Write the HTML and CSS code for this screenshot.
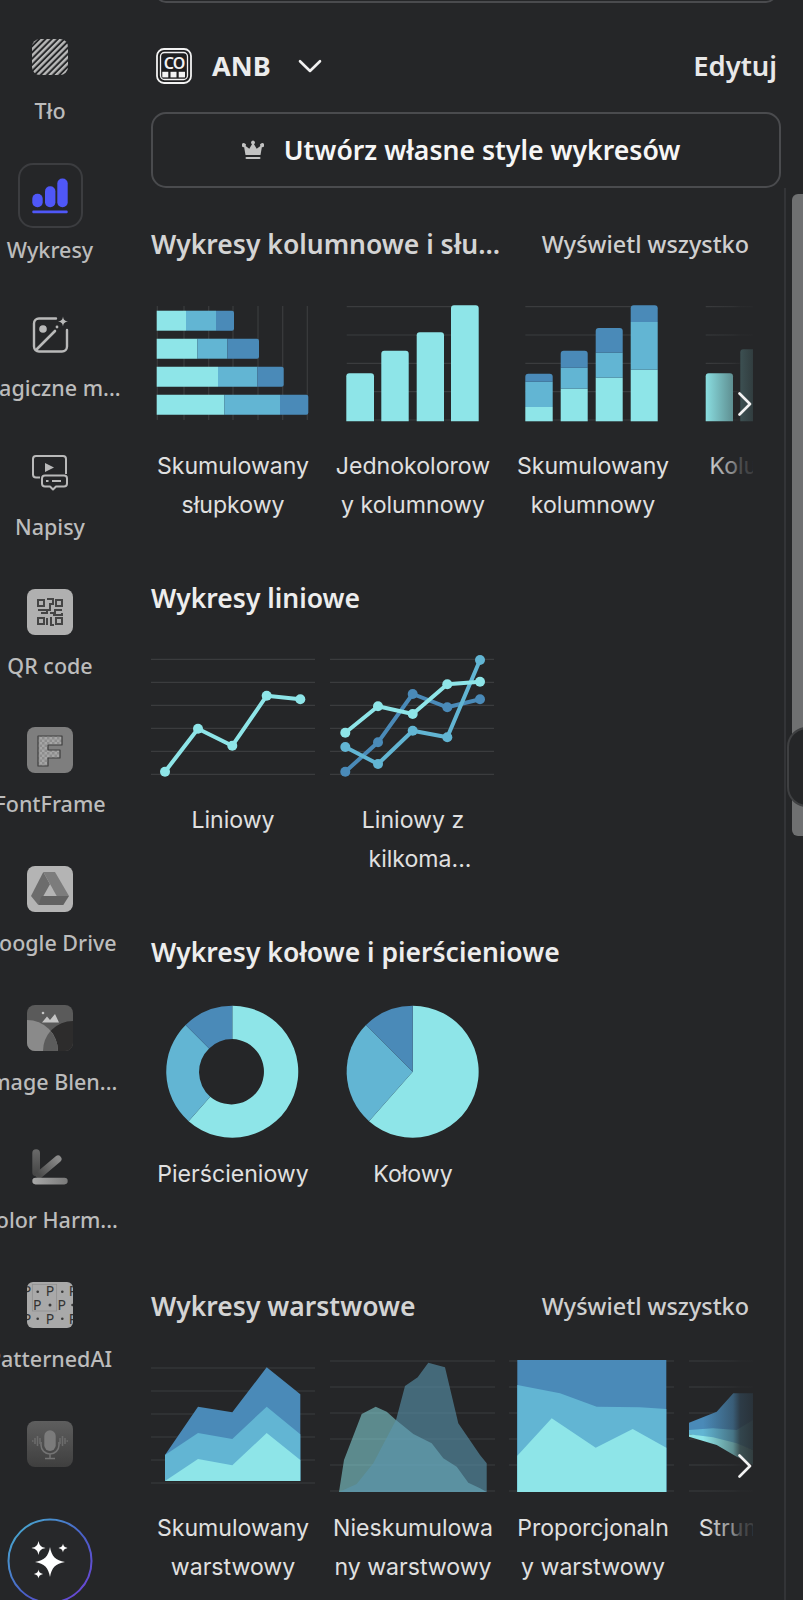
FILE: index.html
```html
<!DOCTYPE html>
<html lang="pl">
<head>
<meta charset="utf-8">
<title>Wykresy</title>
<link rel="stylesheet" href="styles.css">
</head>
<body>
<div class="app">
  <nav class="rail">
    <div class="rail-item">
      <div class="rail-icon">
        <svg width="46" height="46" viewBox="0 0 46 46">
          <defs>
            <pattern id="stripes" width="4.4" height="4.4" patternUnits="userSpaceOnUse" patternTransform="rotate(-45)"><rect width="4.4" height="2.4" fill="#b9b9b9"/></pattern>
          </defs>
          <rect x="5" y="5" width="36" height="36" rx="8" fill="url(#stripes)"/>
        </svg>
      </div>
      <span class="rail-label">Tło</span>
    </div>
    <div class="rail-item">
      <div class="rail-icon">
        <div class="active-box">
          <svg width="36" height="36" viewBox="0 0 36 36">
            <rect x="0.300" y="15.800" width="10.400" height="13.400" rx="5" fill="#4f57f8"/>
            <rect x="13" y="8.200" width="10.400" height="21" rx="5" fill="#4f57f8"/>
            <rect x="25.300" y="0.500" width="10.400" height="28.700" rx="5" fill="#4f57f8"/>
            <rect x="0.300" y="32.500" width="35.400" height="2.700" rx="1" fill="#4f57f8"/>
          </svg>
        </div>
      </div>
      <span class="rail-label">Wykresy</span>
    </div>
    <div class="rail-item">
      <div class="rail-icon">
        <svg width="46" height="46" viewBox="0 0 46 46" fill="none" stroke="#b9b9b9" stroke-width="2.4" stroke-linecap="round">
          <path d="M29 7.500H12a5 5 0 0 0-5 5v23a5 5 0 0 0 5 5h23a5 5 0 0 0 5-5V19"/>
          <circle cx="16" cy="18" r="3.800" fill="#b9b9b9" stroke="none"/>
          <path d="M10 38 28 20" stroke-width="2.600"/>
          <path d="M36 5.500c.6 3.400 1.600 4.400 5 5-3.400.6-4.400 1.600-5 5-.6-3.400-1.600-4.400-5-5 3.400-.6 4.400-1.600 5-5z" fill="#b9b9b9" stroke="none"/>
          <circle cx="30" cy="16" r="1.400" fill="#b9b9b9" stroke="none"/>
        </svg>
      </div>
      <span class="rail-label">Magiczne m...</span>
    </div>
    <div class="rail-item">
      <div class="rail-icon">
        <svg width="46" height="46" viewBox="0 0 46 46" fill="none" stroke="#b9b9b9" stroke-width="2" stroke-linejoin="round">
          <path d="M13 27.500H9a3 3 0 0 1-3-3V9a3 3 0 0 1 3-3h27a3 3 0 0 1 3 3v15"/>
          <path d="M18 13v9l9-4.500z" fill="#b9b9b9" stroke="none"/>
          <path d="M18 25.500h19a3 3 0 0 1 3 3v5a3 3 0 0 1-3 3h-8l-3 3-3-3h-5a3 3 0 0 1-3-3v-5a3 3 0 0 1 3-3z"/>
          <path d="M19 31h2.500M25 31h9" stroke-width="1.800"/>
        </svg>
      </div>
      <span class="rail-label">Napisy</span>
    </div>
    <div class="rail-item">
      <div class="rail-icon">
        <svg width="46" height="46" viewBox="0 0 46 46">
          <rect width="46" height="46" rx="8" fill="#b0b0b0"/>
          <g fill="none" stroke="#454545" stroke-width="2">
            <rect x="11" y="11" width="6" height="6"/><rect x="29" y="11" width="6" height="6"/><rect x="11" y="29" width="6" height="6"/><rect x="29" y="29" width="6" height="6"/>
            <path d="M20 10h6v5h-3v6h-12M14 24h6v-3M23 24h5v-3h7M35 24v2h-8v-3M20 29v7M24 28v8h3"/>
          </g>
        </svg>
      </div>
      <span class="rail-label">QR code</span>
    </div>
    <div class="rail-item">
      <div class="rail-icon">
        <svg width="46" height="46" viewBox="0 0 46 46">
          <defs>
            <pattern id="check" width="5" height="5" patternUnits="userSpaceOnUse"><rect width="5" height="5" fill="#a5a5a5"/><rect width="2.500" height="2.500" fill="#8d8d8d"/><rect x="2.500" y="2.500" width="2.500" height="2.500" fill="#8d8d8d"/></pattern>
          </defs>
          <rect width="46" height="46" rx="8" fill="#7e7e7e"/>
          <path d="M11 9h24v9H21v5h12v8H21v8H11z" fill="url(#check)" stroke="#3f3f3f" stroke-width="1.200" stroke-linejoin="round"/>
        </svg>
      </div>
      <span class="rail-label">FontFrame</span>
    </div>
    <div class="rail-item">
      <div class="rail-icon">
        <svg width="46" height="46" viewBox="0 0 46 46">
          <rect width="46" height="46" rx="8" fill="#b4b4b4"/>
          <polygon points="16.300,6 23,18.300 11.300,39 4,30" fill="#6c6c6c"/>
          <polygon points="16.300,6 28,6 42,30 29.700,30" fill="#7c7c7c"/>
          <polygon points="14.700,30 42,30 36.300,39 11.300,39" fill="#626262"/>
        </svg>
      </div>
      <span class="rail-label">Google Drive</span>
    </div>
    <div class="rail-item">
      <div class="rail-icon">
        <svg width="46" height="46" viewBox="0 0 46 46">
          <defs><clipPath id="blend"><rect width="46" height="46" rx="8"/></clipPath></defs>
          <g clip-path="url(#blend)">
            <rect width="46" height="46" fill="#5a5a5a"/>
            <circle cx="46" cy="46" r="30" fill="#2d2c2c"/>
            <circle cx="0" cy="46" r="31" fill="#8a8a8a"/>
            <path d="M16 46a30 30 0 0 1 7.500-20 31 31 0 0 1 7.500 20z" fill="#5c5c5c"/>
            <path d="M15 17.500l5-6 3 3.500 5-6 4 8.500z" fill="#c4c4c4"/>
            <circle cx="16" cy="8" r="1.300" fill="#c4c4c4"/>
          </g>
        </svg>
      </div>
      <span class="rail-label">Image Blen...</span>
    </div>
    <div class="rail-item">
      <div class="rail-icon">
        <svg width="46" height="46" viewBox="0 0 46 46">
          <defs>
            <linearGradient id="harmH"><stop offset="0" stop-color="#a8a8a8"/><stop offset="1" stop-color="#7a7a7a"/></linearGradient>
            <linearGradient id="harmV" x1="0" y1="0" x2="0" y2="1"><stop offset="0" stop-color="#6a6a6a"/><stop offset="1" stop-color="#444"/></linearGradient>
            <linearGradient id="harmD" gradientUnits="userSpaceOnUse" x1="12" y1="32" x2="31" y2="16"><stop offset="0" stop-color="#4a4a4a"/><stop offset="1" stop-color="#8a8a8a"/></linearGradient>
          </defs>
          <rect x="5.300" y="6.300" width="7.700" height="27" rx="3.800" fill="url(#harmV)"/>
          <path d="M12 32 31 16" stroke="url(#harmD)" stroke-width="7" stroke-linecap="round" fill="none"/>
          <rect x="5.300" y="34.700" width="35.400" height="6.700" rx="3.300" fill="url(#harmH)"/>
        </svg>
      </div>
      <span class="rail-label">Color Harm...</span>
    </div>
    <div class="rail-item">
      <div class="rail-icon">
        <svg width="46" height="46" viewBox="0 0 46 46">
          <defs><clipPath id="patclip"><rect width="46" height="46" rx="6"/></clipPath></defs>
          <g clip-path="url(#patclip)">
            <rect width="46" height="46" fill="#a9a9a9"/>
            <rect x="5.300" y="2.300" width="24.400" height="26.700" fill="none" stroke="#8c8c8c" stroke-width="0.700"/>
            <g class="pat-letters">
              <text x="23" y="14">P</text><text x="10.300" y="28">P</text><text x="34.700" y="28">P</text><text x="23" y="42">P</text>
              <text x="0" y="14">P</text><text x="46" y="14">P</text><text x="0" y="42">P</text><text x="46" y="42">P</text>
            </g>
            <g fill="#3a3a3a"><circle cx="10.700" cy="9.700" r="1.300"/><circle cx="35.300" cy="9.700" r="1.300"/><circle cx="23" cy="23" r="1.500"/><circle cx="10.700" cy="36.700" r="1.300"/><circle cx="35.300" cy="36.700" r="1.300"/><circle cx="45.500" cy="23" r="1.300"/></g>
          </g>
        </svg>
      </div>
      <span class="rail-label">PatternedAI</span>
    </div>
    <div class="rail-item">
      <div class="rail-icon">
        <svg width="46" height="46" viewBox="0 0 46 46">
          <defs><linearGradient id="voice" x1="0" y1="0" x2="0" y2="1"><stop offset="0" stop-color="#5e5e5e"/><stop offset="1" stop-color="#3f3f3f"/></linearGradient></defs>
          <rect width="46" height="46" rx="8" fill="url(#voice)"/>
          <rect x="17.300" y="9.300" width="11.400" height="20.700" rx="5.700" fill="#7b7b7b"/>
          <path d="M14 21v3a9 9 0 0 0 18 0v-3M23 33v4M18 37.500h10" fill="none" stroke="#747474" stroke-width="1.500"/>
          <path d="M5 20h1.500M8 17v6M10.500 15v10M13 17v6M33 17v6M35.500 15v10M38 17v6M39.500 20H41" fill="none" stroke="#6c6c6c" stroke-width="1.500"/>
        </svg>
      </div>
    </div>
    <div class="magic">
      <svg width="86" height="86" viewBox="0 0 86 86">
        <defs><linearGradient id="ring" x1="0" y1="0" x2="1" y2="1"><stop offset="0.1" stop-color="#48a6cf"/><stop offset="0.55" stop-color="#4a5fc8"/><stop offset="1" stop-color="#7240d8"/></linearGradient></defs>
        <circle cx="43" cy="43" r="41.500" fill="#27282a" stroke="url(#ring)" stroke-width="2"/>
        <path d="M43 29c1.600 9.400 5.600 13.400 15 15-9.400 1.600-13.400 5.600-15 15-1.600-9.400-5.600-13.400-15-15 9.400-1.600 13.400-5.600 15-15z" fill="#fff"/>
        <path d="M31.500 23c1 4.600 2.400 6 7 7-4.600 1-6 2.400-7 7-1-4.600-2.400-6-7-7 4.600-1 6-2.400 7-7z" fill="#fff"/>
        <path d="M56 25.500c.6 2.800 1.200 3.400 4.500 4.500-3.300 1.100-3.900 1.700-4.500 4.500-.6-2.800-1.200-3.400-4.500-4.500 3.300-1.100 3.900-1.700 4.500-4.500z" fill="#fff"/>
        <path d="M31.500 51.500c.6 2.800 1.200 3.400 4.500 4.500-3.300 1.100-3.900 1.700-4.500 4.500-.6-2.800-1.200-3.400-4.500-4.500 3.300-1.100 3.900-1.700 4.500-4.500z" fill="#fff"/>
      </svg>
    </div>
  </nav>

  <main class="panel">
    <div class="top-box"></div>

    <div class="brand-row">
      <div class="brand">
        <svg class="brand-logo" width="36" height="36" viewBox="0 0 36 36">
          <rect x="1" y="1" width="34" height="34" rx="7" fill="#1f1f20" stroke="#f2f2f2" stroke-width="1.800"/>
          <rect x="4.500" y="4.500" width="27" height="27" rx="4" fill="none" stroke="#f2f2f2" stroke-width="1.300"/>
          <text class="brand-co" x="18" y="20.800">CO</text>
          <rect x="6.300" y="23.800" width="6" height="5.600" fill="#f2f2f2"/>
          <rect x="14.500" y="23.800" width="6" height="5.600" fill="#f2f2f2"/>
          <rect x="22.700" y="23.800" width="6.300" height="5.600" fill="#f2f2f2"/>
        </svg>
        <span class="brand-name">ANB</span>
        <svg width="24" height="14" viewBox="0 0 24 14"><path d="M2 2.200 12 12 22 2.200" fill="none" stroke="#f0f0f0" stroke-width="2.600" stroke-linecap="round" stroke-linejoin="round"/></svg>
      </div>
      <span class="edit">Edytuj</span>
    </div>

    <button class="create-btn" type="button">
      <svg width="22" height="20" viewBox="0 0 22 20"><path d="M11 0.500a2 2 0 0 1 1 3.700l2.700 4.500 3.700-2.600a2 2 0 1 1 1.500 1L18.500 15h-15L2.100 7.100a2 2 0 1 1 1.500-1l3.700 2.600L10 4.200a2 2 0 0 1 1-3.700z" fill="#c2c2c2"/><rect x="3.500" y="17" width="15" height="2" rx="1" fill="#c2c2c2"/></svg>
      <span>Utwórz własne style wykresów</span>
    </button>

    <section class="section">
      <div class="section-head dim">
        <h2>Wykresy kolumnowe i słu...</h2>
        <a class="see-all">Wyświetl wszystko</a>
      </div>
      <div class="carousel">
        <figure class="tile">
          <svg class="chart" viewBox="151 300 164 135">
            <g class="grid"><path d="M157.300 306v114M184 306v114M208.700 306v114M233 306v114M258 306v114M282.700 306v114M307.300 306v114"/></g>
            <path d="M156.700 310.700H186v20h-29.300z" class="c1"/><path d="M186 310.700h30v20h-30z" class="c2"/><path d="M216 310.700h16a2 2 0 0 1 2 2v16a2 2 0 0 1-2 2h-16z" class="c3"/>
            <path d="M156.700 338.700h40.600v20h-40.600z" class="c1"/><path d="M197.300 338.700h30v20h-30z" class="c2"/><path d="M227.300 338.700h29.700a2 2 0 0 1 2 2v16a2 2 0 0 1-2 2h-29.700z" class="c3"/>
            <path d="M156.700 366.700H218v20h-61.300z" class="c1"/><path d="M218 366.700h39.300v20H218z" class="c2"/><path d="M257.300 366.700h24.400a2 2 0 0 1 2 2v16a2 2 0 0 1-2 2h-24.400z" class="c3"/>
            <path d="M156.700 394.700h67.600v20h-67.600z" class="c1"/><path d="M224.300 394.700H280v20h-55.700z" class="c2"/><path d="M280 394.700h26.300a2 2 0 0 1 2 2v16a2 2 0 0 1-2 2H280z" class="c3"/>
          </svg>
          <figcaption>Skumulowany słupkowy</figcaption>
        </figure>
        <figure class="tile">
          <svg class="chart" viewBox="331 300 164 135">
            <g class="grid"><path d="M346.700 306.700H478M346.700 335H478M346.700 363.300H478M346.700 391.700H478M346.700 420H478"/></g>
            <path class="c1" d="M346.300 421.300v-45a3 3 0 0 1 3-3H371a3 3 0 0 1 3 3v45z"/>
            <path class="c1" d="M381.300 421.300v-67.600a3 3 0 0 1 3-3h21.400a3 3 0 0 1 3 3v67.600z"/>
            <path class="c1" d="M416.700 421.300v-86a3 3 0 0 1 3-3H441a3 3 0 0 1 3 3v86z"/>
            <path class="c1" d="M451 421.300v-113a3 3 0 0 1 3-3h21.700a3 3 0 0 1 3 3v113z"/>
          </svg>
          <figcaption>Jednokolorowy kolumnowy</figcaption>
        </figure>
        <figure class="tile">
          <svg class="chart" viewBox="511 300 164 135">
            <g class="grid"><path d="M525.300 306.700H657M525.300 335H657M525.300 363.300H657M525.300 391.700H657M525.300 420H657"/></g>
            <rect class="c1" x="525.300" y="407" width="27.400" height="14.300"/><rect class="c2" x="525.300" y="381.700" width="27.400" height="25.300"/><path class="c3" d="M525.300 381.700v-5a3 3 0 0 1 3-3h21.400a3 3 0 0 1 3 3v5z"/>
            <rect class="c1" x="560.700" y="388.700" width="27" height="32.600"/><rect class="c2" x="560.700" y="367.700" width="27" height="21"/><path class="c3" d="M560.700 367.700v-14a3 3 0 0 1 3-3h21a3 3 0 0 1 3 3v14z"/>
            <rect class="c1" x="595.700" y="377.700" width="27" height="43.600"/><rect class="c2" x="595.700" y="352.700" width="27" height="25"/><path class="c3" d="M595.700 352.700V331a3 3 0 0 1 3-3h21a3 3 0 0 1 3 3v21.700z"/>
            <rect class="c1" x="630.700" y="369.700" width="27" height="51.600"/><rect class="c2" x="630.700" y="322" width="27" height="47.700"/><path class="c3" d="M630.700 322v-13.700a3 3 0 0 1 3-3h21a3 3 0 0 1 3 3V322z"/>
          </svg>
          <figcaption>Skumulowany kolumnowy</figcaption>
        </figure>
        <figure class="tile">
          <svg class="chart" viewBox="691 300 164 135">
            <g class="grid"><path d="M705.700 306.700H840M705.700 335H840M705.700 363.300H840M705.700 391.700H840M705.700 420H840"/></g>
            <path class="c1" d="M705.700 421.300v-45a3 3 0 0 1 3-3H730a3 3 0 0 1 3 3v45z"/>
            <path class="c1" d="M740.300 421.300v-69a3 3 0 0 1 3-3H765a3 3 0 0 1 3 3v69z"/>
          </svg>
          <figcaption>Kolumnowy</figcaption>
        </figure>
        <div class="fade"></div>
        <svg class="next" width="14" height="24" viewBox="0 0 14 24"><path d="M1.500 1.500 12 12 1.500 22.500" fill="none" stroke="#f2f2f2" stroke-width="2.600" stroke-linecap="round" stroke-linejoin="round"/></svg>
      </div>
    </section>

    <section class="section">
      <div class="section-head">
        <h2>Wykresy liniowe</h2>
      </div>
      <div class="carousel">
        <figure class="tile">
          <svg class="chart" viewBox="151 654 164 135">
            <g class="grid"><path d="M150 659.300h165M150 682.300h165M150 705.300h165M150 728.300h165M150 751.300h165M150 774.300h165"/></g>
            <polyline class="line l1" points="165,771.700 198,728.700 232.300,745.700 266.700,695.700 300.300,699.300"/>
            <g class="c1"><circle cx="165" cy="771.700" r="5"/><circle cx="198" cy="728.700" r="5"/><circle cx="232.300" cy="745.700" r="5"/><circle cx="266.700" cy="695.700" r="5"/><circle cx="300.300" cy="699.300" r="5"/></g>
          </svg>
          <figcaption>Liniowy</figcaption>
        </figure>
        <figure class="tile">
          <svg class="chart" viewBox="331 654 164 135">
            <g class="grid"><path d="M330 659.300h164M330 682.300h164M330 705.300h164M330 728.300h164M330 751.300h164M330 774.300h164"/></g>
            <polyline class="line l3" points="345.300,771.700 378,742.300 412.700,694 447.300,707.300 480,699.300"/>
            <g class="c3"><circle cx="345.300" cy="771.700" r="5"/><circle cx="378" cy="742.300" r="5"/><circle cx="412.700" cy="694" r="5"/><circle cx="447.300" cy="707.300" r="5"/><circle cx="480" cy="699.300" r="5"/></g>
            <polyline class="line l2" points="345.300,747 378,764 412.700,730.700 447.300,737.300 480,660"/>
            <g class="c2"><circle cx="345.300" cy="747" r="5"/><circle cx="378" cy="764" r="5"/><circle cx="412.700" cy="730.700" r="5"/><circle cx="447.300" cy="737.300" r="5"/><circle cx="480" cy="660" r="5"/></g>
            <polyline class="line l1" points="345.300,732.700 378,706.300 412.700,714 447.300,684.300 480,681.700"/>
            <g class="c1"><circle cx="345.300" cy="732.700" r="5"/><circle cx="378" cy="706.300" r="5"/><circle cx="412.700" cy="714" r="5"/><circle cx="447.300" cy="684.300" r="5"/><circle cx="480" cy="681.700" r="5"/></g>
          </svg>
          <figcaption>Liniowy z <span class="clamped">kilkoma...</span></figcaption>
        </figure>
      </div>
    </section>

    <section class="section">
      <div class="section-head">
        <h2>Wykresy kołowe i pierścieniowe</h2>
      </div>
      <div class="carousel">
        <figure class="tile">
          <svg class="chart" viewBox="151 1008 164 135">
            <path class="c1" d="M232.300 1005.700a66 66 0 1 1-43.700 115.500l21.600-24.500a32.700 32.700 0 1 0 22.100-57.700z"/>
            <path class="c2" d="M188.600 1121.200a66 66 0 0 1-3-96.200l23.500 23.500a32.700 32.700 0 0 0 1.100 48.200z"/>
            <path class="c3" d="M185.600 1025a66 66 0 0 1 46.700-19.300V1039a32.700 32.700 0 0 0-23.200 9.500z"/>
          </svg>
          <figcaption>Pierścieniowy</figcaption>
        </figure>
        <figure class="tile">
          <svg class="chart" viewBox="331 1008 164 135">
            <path class="c1" d="M412.700 1005.700a66 66 0 1 1-43.700 115.500l43.700-49.500z"/>
            <path class="c2" d="M369 1121.200a66 66 0 0 1-3-96.200l46.700 46.700z"/>
            <path class="c3" d="M366 1025a66 66 0 0 1 46.700-19.300v66z"/>
          </svg>
          <figcaption>Kołowy</figcaption>
        </figure>
      </div>
    </section>

    <section class="section">
      <div class="section-head dim">
        <h2>Wykresy warstwowe</h2>
        <a class="see-all">Wyświetl wszystko</a>
      </div>
      <div class="carousel">
        <figure class="tile">
          <svg class="chart" viewBox="151 1362 164 135">
            <g class="grid"><path d="M150 1368h165M150 1391h165M150 1414h165M150 1437h165M150 1460h165M150 1483h165"/></g>
            <polygon class="c3" points="165,1481 165,1455 198,1406.700 232.300,1412.300 266.700,1367.300 300.300,1394.300 300.300,1481"/>
            <polygon class="c2" points="165,1481 165,1455 198,1433 232.300,1439 266.700,1406.700 300.300,1434.300 300.300,1481"/>
            <polygon class="c1" points="165,1481 198,1459 232.300,1465.300 266.700,1433 300.300,1460 300.300,1481"/>
          </svg>
          <figcaption>Skumulowany warstwowy</figcaption>
        </figure>
        <figure class="tile">
          <svg class="chart" viewBox="331 1362 164 135">
            <g class="grid"><path d="M330 1361h165M330 1387h165M330 1413h165M330 1439h165M330 1465h165M330 1491h165"/></g>
            <polygon class="area-a" points="339,1492 344,1460 361.700,1414 375.700,1406.700 386.700,1411.700 396,1420 413.300,1434 431.700,1443.300 443.300,1458.300 456.700,1466.700 468.300,1482.700 480,1488.300 486.700,1492"/>
            <polygon class="area-b" points="339,1492 356.700,1484 373.300,1463.300 396,1420 405,1386 417.700,1377.300 428.300,1362.700 445,1367.300 458.300,1423.300 480,1455 486.700,1463.300 486.700,1492"/>
          </svg>
          <figcaption>Nieskumulowany warstwowy</figcaption>
        </figure>
        <figure class="tile">
          <svg class="chart" viewBox="511 1362 164 135">
            <g class="grid"><path d="M509 1361h165M509 1387h165M509 1413h165M509 1439h165M509 1465h165M509 1491h165"/></g>
            <rect class="c3" x="517.300" y="1360" width="149" height="132"/>
            <polygon class="c2" points="517.300,1385 560,1393.300 596.700,1406.700 640,1407.300 666.300,1409 666.300,1492 517.300,1492"/>
            <polygon class="c1" points="517.300,1455.700 551.700,1418.300 595.700,1447.700 632.700,1429 666.300,1447.700 666.300,1492 517.300,1492"/>
          </svg>
          <figcaption>Proporcjonalny warstwowy</figcaption>
        </figure>
        <figure class="tile">
          <svg class="chart" viewBox="691 1362 164 135">
            <g class="grid"><path d="M689 1361h165M689 1387h165M689 1413h165M689 1439h165M689 1465h165M689 1491h165"/></g>
            <path class="c3" d="M689 1422.700 716.700 1411.700 733.300 1393.300 753 1393.300 790 1400 790 1440 753 1430 733 1430 689 1430z"/>
            <path class="c2" d="M689 1430 713 1428.300 736.700 1430 753 1420 790 1420 790 1460 753 1450 733.300 1443.300 689 1434.300z"/>
            <path class="c1" d="M689 1434.300 713 1437.300 736.700 1443.300 753 1450 790 1465 753 1465 736.700 1456.700 716.700 1445 689 1436.700z"/>
          </svg>
          <figcaption>Strumieniowy</figcaption>
        </figure>
        <div class="fade"></div>
        <svg class="next" width="14" height="24" viewBox="0 0 14 24"><path d="M1.500 1.500 12 12 1.500 22.500" fill="none" stroke="#f2f2f2" stroke-width="2.600" stroke-linecap="round" stroke-linejoin="round"/></svg>
      </div>
    </section>

    <div class="track"></div>
    <div class="thumb"></div>
    <div class="handle"></div>
  </main>
</div>
</body>
</html>
```

FILE: styles.css
```css
html, body {
  margin: 0;
  height: 1600px;
  overflow: hidden;
  background: #252628;
}
body {
  font-family: "Noto Sans", "Liberation Sans", sans-serif;
  color: #e8e8e8;
}
.app {
  display: flex;
  width: 803px;
  height: 1600px;
  overflow: hidden;
  position: relative;
}

/* rail */
.rail {
  width: 100px;
  flex: none;
  padding-top: 34px;
  display: flex;
  flex-direction: column;
}
.rail-item {
  height: 138.67px;
  flex: none;
  display: flex;
  flex-direction: column;
  align-items: center;
}
.rail-icon {
  width: 46px;
  height: 46px;
  flex: none;
  display: flex;
  align-items: center;
  justify-content: center;
}
.rail-label {
  margin-top: 15px;
  height: 32px;
  line-height: 32px;
  font-size: 21.5px;
  font-weight: 500;
  color: #bcbcbc;
  white-space: nowrap;
}
.active-box {
  width: 65px;
  height: 65px;
  flex: none;
  box-sizing: border-box;
  border: 2px solid #3c3d40;
  border-radius: 15px;
  display: flex;
  align-items: center;
  justify-content: center;
}
.pat-letters text {
  font-family: "Noto Sans", sans-serif;
  font-size: 14px;
  text-anchor: middle;
  fill: #333;
}
.magic {
  position: absolute;
  left: 7px;
  top: 1518px;
  width: 86px;
  height: 86px;
}

/* panel */
.panel {
  flex: 1;
  padding-left: 51px;
  min-width: 0;
  position: relative;
}
.top-box {
  width: 622px;
  height: 22px;
  margin: -19px 0 0 4px;
  box-sizing: border-box;
  border: 2px solid #4a4b4e;
  border-radius: 14px;
}
.brand-row {
  width: 626px;
  margin-top: 44px;
  padding-left: 5px;
  height: 37px;
  box-sizing: border-box;
  display: flex;
  align-items: center;
  justify-content: space-between;
}
.brand {
  display: flex;
  align-items: center;
}
.brand-logo {
  margin-right: 20px;
}
.brand-co {
  font-size: 16px;
  font-weight: 600;
  letter-spacing: -1px;
  text-anchor: middle;
  fill: #f2f2f2;
}
.brand-name {
  font-size: 27px;
  font-weight: 700;
  line-height: 37px;
  color: #ececec;
  margin-right: 27px;
}
.edit {
  font-size: 27.4px;
  font-weight: 600;
  line-height: 37px;
  color: #e8e8e8;
}
.create-btn {
  display: flex;
  align-items: center;
  justify-content: center;
  gap: 20px;
  width: 630px;
  height: 76px;
  margin-top: 28px;
  box-sizing: border-box;
  background: none;
  border: 2px solid #4a4b4e;
  border-radius: 15px;
  font-family: inherit;
  font-size: 26.6px;
  font-weight: 600;
  color: #f6f6f6;
  padding: 0 10px 0 0;
}
.section {
  margin-bottom: 54px;
}
.create-btn + .section {
  margin-top: 37px;
}
.section-head {
  width: 598px;
  height: 40px;
  margin-bottom: 27px;
  padding-bottom: 3px;
  box-sizing: border-box;
  display: flex;
  align-items: center;
  justify-content: space-between;
}
.section-head h2 {
  margin: 0;
  font-size: 26.5px;
  font-weight: 600;
  color: #ededed;
  white-space: nowrap;
}
.section-head.dim h2 {
  color: #d4d4d4;
}
.see-all {
  font-size: 23.4px;
  font-weight: 500;
  color: #cfcfcf;
  white-space: nowrap;
}
.carousel {
  width: 602px;
  padding-top: 8px;
  display: flex;
  gap: 16px;
  overflow: hidden;
  position: relative;
}
.tile {
  width: 164px;
  flex: none;
  margin: 0;
}
.chart {
  display: block;
  width: 164px;
  height: 135px;
  overflow: visible;
}
figcaption {
  margin-top: 12px;
  height: 78px;
  line-height: 39px;
  font-family: "Inter", "Noto Sans", sans-serif;
  font-size: 23.1px;
  color: #e0e0e0;
  text-align: center;
  overflow-wrap: anywhere;
}
.clamped {
  display: block;
  padding-left: 14px;
}
.grid path {
  fill: none;
  stroke: #3b3c3e;
  stroke-width: 1.2;
}
.c1 { fill: #8ee5e8; }
.c2 { fill: #62b5d3; }
.c3 { fill: #4a8ab8; }
.line {
  fill: none;
  stroke-width: 4;
  stroke-linejoin: round;
}
.l1 { stroke: #8ee5e8; }
.l2 { stroke: #62b5d3; }
.l3 { stroke: #4a8ab8; }
.area-a { fill: rgba(142, 229, 232, 0.53); }
.area-b { fill: rgba(90, 150, 175, 0.6); }
.fade {
  position: absolute;
  top: 0;
  right: 0;
  bottom: 0;
  width: 50px;
  background: linear-gradient(to right, rgba(37, 38, 40, 0), rgba(37, 38, 40, 0.45) 60%, rgba(37, 38, 40, 0.78) 74%, rgba(37, 38, 40, 0.88));
}
.next {
  position: absolute;
  right: 1px;
  top: 100px;
}

/* scrollbar + collapse handle */
.track {
  position: absolute;
  left: 684px;
  top: 188px;
  bottom: 0;
  width: 2px;
  background: #333437;
}
.thumb {
  position: absolute;
  left: 692px;
  top: 194px;
  width: 11px;
  height: 642px;
  border-radius: 6px 0 0 6px;
  background: #6f7071;
}
.handle {
  position: absolute;
  left: 687px;
  top: 727px;
  width: 24px;
  height: 80px;
  box-sizing: border-box;
  background: #252628;
  border: 2px solid #3f4042;
  border-radius: 20px 0 0 20px;
}
```
